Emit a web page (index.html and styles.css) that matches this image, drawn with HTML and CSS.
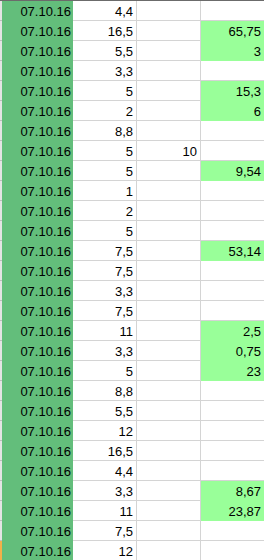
FILE: index.html
```html
<!DOCTYPE html>
<html>
<head>
<meta charset="utf-8">
<link rel="stylesheet" href="styles.css">
</head>
<body>
<div class="sheet">
  <div class="row"><div class="hdr"></div><div class="a">07.10.16</div><div class="b">4,4</div><div class="c"></div><div class="d"></div></div>
  <div class="row"><div class="hdr"></div><div class="a">07.10.16</div><div class="b">16,5</div><div class="c"></div><div class="d fill">65,75</div></div>
  <div class="row"><div class="hdr"></div><div class="a">07.10.16</div><div class="b">5,5</div><div class="c"></div><div class="d fill">3</div></div>
  <div class="row"><div class="hdr"></div><div class="a">07.10.16</div><div class="b">3,3</div><div class="c"></div><div class="d"></div></div>
  <div class="row"><div class="hdr"></div><div class="a">07.10.16</div><div class="b">5</div><div class="c"></div><div class="d fill">15,3</div></div>
  <div class="row"><div class="hdr"></div><div class="a">07.10.16</div><div class="b">2</div><div class="c"></div><div class="d fill">6</div></div>
  <div class="row"><div class="hdr"></div><div class="a">07.10.16</div><div class="b">8,8</div><div class="c"></div><div class="d"></div></div>
  <div class="row"><div class="hdr"></div><div class="a">07.10.16</div><div class="b">5</div><div class="c">10</div><div class="d"></div></div>
  <div class="row"><div class="hdr"></div><div class="a">07.10.16</div><div class="b">5</div><div class="c"></div><div class="d fill">9,54</div></div>
  <div class="row"><div class="hdr"></div><div class="a">07.10.16</div><div class="b">1</div><div class="c"></div><div class="d"></div></div>
  <div class="row"><div class="hdr"></div><div class="a">07.10.16</div><div class="b">2</div><div class="c"></div><div class="d"></div></div>
  <div class="row"><div class="hdr"></div><div class="a">07.10.16</div><div class="b">5</div><div class="c"></div><div class="d"></div></div>
  <div class="row"><div class="hdr"></div><div class="a">07.10.16</div><div class="b">7,5</div><div class="c"></div><div class="d fill">53,14</div></div>
  <div class="row"><div class="hdr"></div><div class="a">07.10.16</div><div class="b">7,5</div><div class="c"></div><div class="d"></div></div>
  <div class="row"><div class="hdr"></div><div class="a">07.10.16</div><div class="b">3,3</div><div class="c"></div><div class="d"></div></div>
  <div class="row"><div class="hdr"></div><div class="a">07.10.16</div><div class="b">7,5</div><div class="c"></div><div class="d"></div></div>
  <div class="row"><div class="hdr"></div><div class="a">07.10.16</div><div class="b">11</div><div class="c"></div><div class="d fill">2,5</div></div>
  <div class="row"><div class="hdr"></div><div class="a">07.10.16</div><div class="b">3,3</div><div class="c"></div><div class="d fill">0,75</div></div>
  <div class="row"><div class="hdr"></div><div class="a">07.10.16</div><div class="b">5</div><div class="c"></div><div class="d fill">23</div></div>
  <div class="row"><div class="hdr"></div><div class="a">07.10.16</div><div class="b">8,8</div><div class="c"></div><div class="d"></div></div>
  <div class="row"><div class="hdr"></div><div class="a">07.10.16</div><div class="b">5,5</div><div class="c"></div><div class="d"></div></div>
  <div class="row"><div class="hdr"></div><div class="a">07.10.16</div><div class="b">12</div><div class="c"></div><div class="d"></div></div>
  <div class="row"><div class="hdr"></div><div class="a">07.10.16</div><div class="b">16,5</div><div class="c"></div><div class="d"></div></div>
  <div class="row"><div class="hdr"></div><div class="a">07.10.16</div><div class="b">4,4</div><div class="c"></div><div class="d"></div></div>
  <div class="row"><div class="hdr"></div><div class="a">07.10.16</div><div class="b">3,3</div><div class="c"></div><div class="d fill">8,67</div></div>
  <div class="row"><div class="hdr"></div><div class="a">07.10.16</div><div class="b">11</div><div class="c"></div><div class="d fill">23,87</div></div>
  <div class="row"><div class="hdr"></div><div class="a">07.10.16</div><div class="b">7,5</div><div class="c"></div><div class="d"></div></div>
  <div class="row"><div class="hdr sel"></div><div class="a">07.10.16</div><div class="b">12</div><div class="c"></div><div class="d"></div></div>
</div>
</body>
</html>
```

FILE: styles.css
```css
html, body {
  margin: 0;
  padding: 0;
  background: #ffffff;
  overflow: hidden;
}

.sheet {
  width: 266px;
  border-top: 1px solid #6b6b6b;
  font-family: "Liberation Sans", Arial, sans-serif;
  font-size: 13px;
  color: #000000;
}

.row {
  display: grid;
  grid-template-columns: 2px 71px 64px 64px 64px;
  height: 20px;
}

.row > div {
  box-sizing: border-box;
  height: 20px;
  border-bottom: 1px solid #d4d4d4;
  display: flex;
  align-items: flex-end;
  justify-content: flex-end;
  line-height: 15px;
  padding-bottom: 1px;
  white-space: nowrap;
}

.hdr {
  background: #e4e4e4;
  border-bottom-color: #bdbdbd !important;
}

.hdr.sel {
  background: #f2b04a;
}

.a {
  background: #63be7b;
  border-bottom-color: #63be7b !important;
  padding-right: 2px;
}

.b, .c {
  border-right: 1px solid #d4d4d4;
  padding-right: 3px;
}

.d {
  padding-right: 4px;
}

.d.fill {
  background: #99ff99;
  border-bottom-color: #99ff99 !important;
}
```
